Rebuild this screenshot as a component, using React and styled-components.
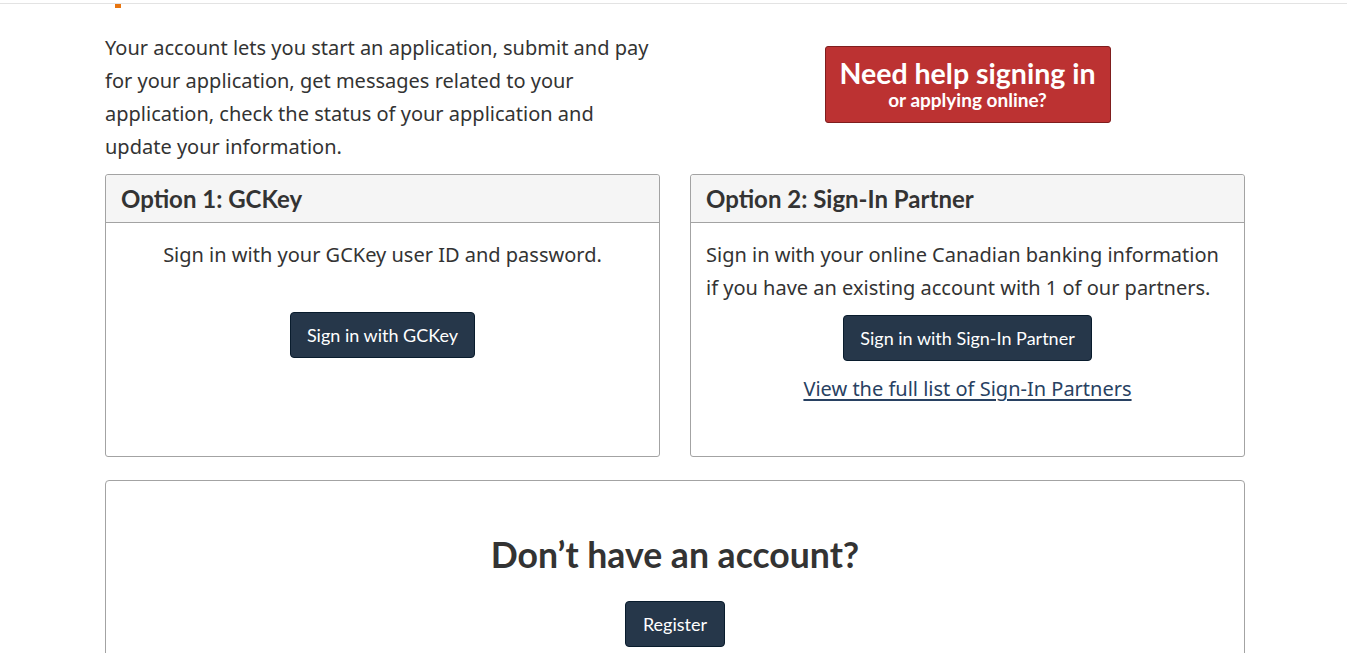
import React from "react";
import styled, { createGlobalStyle } from "styled-components";

const colors = {
  text: "#333333",
  link: "#284162",
  navy: "#26374a",
  border: "#a3a3a3",
  headingBg: "#f5f5f5",
  red: "#bc3232",
  redBorder: "#7f1e1e",
  orange: "#e8750f",
  rule: "#e3e3e3",
};

const GlobalStyle = createGlobalStyle`
  html, body {
    margin: 0;
    padding: 0;
    background: #fff;
  }
  body {
    font-family: "Noto Sans", "DejaVu Sans", sans-serif;
    font-size: 20px;
    line-height: 33px;
    color: ${colors.text};
  }
`;

const App = () => {
  return (
    <>
      <GlobalStyle />
      <TopRule />
      <Container>
        <Underline />
        <Row>
          <Col>
            <Intro>
              Your account lets you start an application, submit and pay for
              your application, get messages related to your application, check
              the status of your application and update your information.
            </Intro>
          </Col>
          <Col center>
            <HelpButton href="#">
              <span className="big">Need help signing in</span>
              <span className="small">or applying online?</span>
            </HelpButton>
          </Col>
        </Row>

        <Row>
          <Col>
            <Panel>
              <PanelHeading>Option 1: GCKey</PanelHeading>
              <PanelBody center>
                <Text>Sign in with your GCKey user ID and password.</Text>
                <Button href="#" gap={41}>
                  Sign in with GCKey
                </Button>
              </PanelBody>
            </Panel>
          </Col>
          <Col>
            <Panel>
              <PanelHeading>Option 2: Sign-In Partner</PanelHeading>
              <PanelBody>
                <Text>
                  Sign in with your online Canadian banking information if you
                  have an existing account with 1 of our partners.
                </Text>
                <Centered>
                  <Button href="#" gap={11}>
                    Sign in with Sign-In Partner
                  </Button>
                  <PartnerLink href="#">
                    View the full list of Sign-In Partners
                  </PartnerLink>
                </Centered>
              </PanelBody>
            </Panel>
          </Col>
        </Row>

        <RegisterPanel>
          <RegisterTitle>Don’t have an account?</RegisterTitle>
          <Button href="#" gap={28} wide>
            Register
          </Button>
        </RegisterPanel>
      </Container>
    </>
  );
};

const TopRule = styled.div`
  margin-top: 3px;
  height: 1px;
  background: ${colors.rule};
`;

const Container = styled.div`
  width: 1140px;
  margin-left: 105px;
`;

const Underline = styled.div`
  width: 6px;
  height: 4px;
  margin-left: 10px;
  background: ${colors.orange};
`;

const Row = styled.div`
  display: flex;
  gap: 30px;
  align-items: stretch;
`;

const Col = styled.div`
  flex: 0 0 555px;
  display: flex;
  flex-direction: column;
  ${({ center }) => (center ? "align-items: center;" : "")}
`;

const Intro = styled.p`
  margin: 23px 0 11px;
`;

const HelpButton = styled.a`
  margin-top: 38px;
  width: 286px;
  height: 77px;
  box-sizing: border-box;
  padding-bottom: 1px;
  display: flex;
  flex-direction: column;
  align-items: center;
  justify-content: center;
  background: ${colors.red};
  border: 1px solid ${colors.redBorder};
  border-radius: 3px;
  color: #fff;
  text-decoration: none;
  font-family: Lato, "Liberation Sans", sans-serif;
  font-weight: 700;
  .big {
    font-size: 28.5px;
    line-height: 30px;
  }
  .small {
    margin-top: 1px;
    font-size: 19px;
    line-height: 22px;
  }
`;

const Panel = styled.div`
  flex: none;
  display: flex;
  flex-direction: column;
  border: 1px solid ${colors.border};
  border-radius: 3px;
  height: 283px;
  box-sizing: border-box;
`;

const PanelHeading = styled.h3`
  margin: 0;
  padding: 10px 15px;
  background: ${colors.headingBg};
  border-bottom: 1px solid ${colors.border};
  border-radius: 3px 3px 0 0;
  font-family: Lato, "Liberation Sans", sans-serif;
  font-weight: 700;
  font-size: 24px;
  line-height: 27px;
  color: ${colors.text};
`;

const PanelBody = styled.div`
  padding: 15px;
  display: flex;
  flex-direction: column;
  align-items: ${({ center }) => (center ? "center" : "stretch")};
  text-align: ${({ center }) => (center ? "center" : "left")};
`;

const Text = styled.p`
  margin: 0;
`;

const Centered = styled.div`
  display: flex;
  flex-direction: column;
  align-items: center;
`;

const Button = styled.a`
  margin-top: ${({ gap }) => gap}px;
  display: inline-flex;
  align-items: center;
  justify-content: center;
  height: 46px;
  box-sizing: border-box;
  padding: 0 ${({ wide }) => (wide ? 17 : 16)}px;
  background: ${colors.navy};
  border: 1px solid #091c2d;
  border-radius: 4px;
  color: #fff;
  text-decoration: none;
  font-family: Lato, "Liberation Sans", sans-serif;
  font-size: 18px;
`;

const PartnerLink = styled.a`
  margin-top: 11px;
  color: ${colors.link};
  text-decoration: underline;
  text-underline-offset: 3px;
`;

const RegisterPanel = styled.div`
  margin-top: 23px;
  border: 1px solid ${colors.border};
  border-radius: 4px;
  height: 200px;
  display: flex;
  flex-direction: column;
  align-items: center;
`;

const RegisterTitle = styled.h2`
  margin: 56px 0 0;
  font-family: Lato, "Liberation Sans", sans-serif;
  font-weight: 700;
  font-size: 35.6px;
  line-height: 36px;
  color: ${colors.text};
`;

export default App;
